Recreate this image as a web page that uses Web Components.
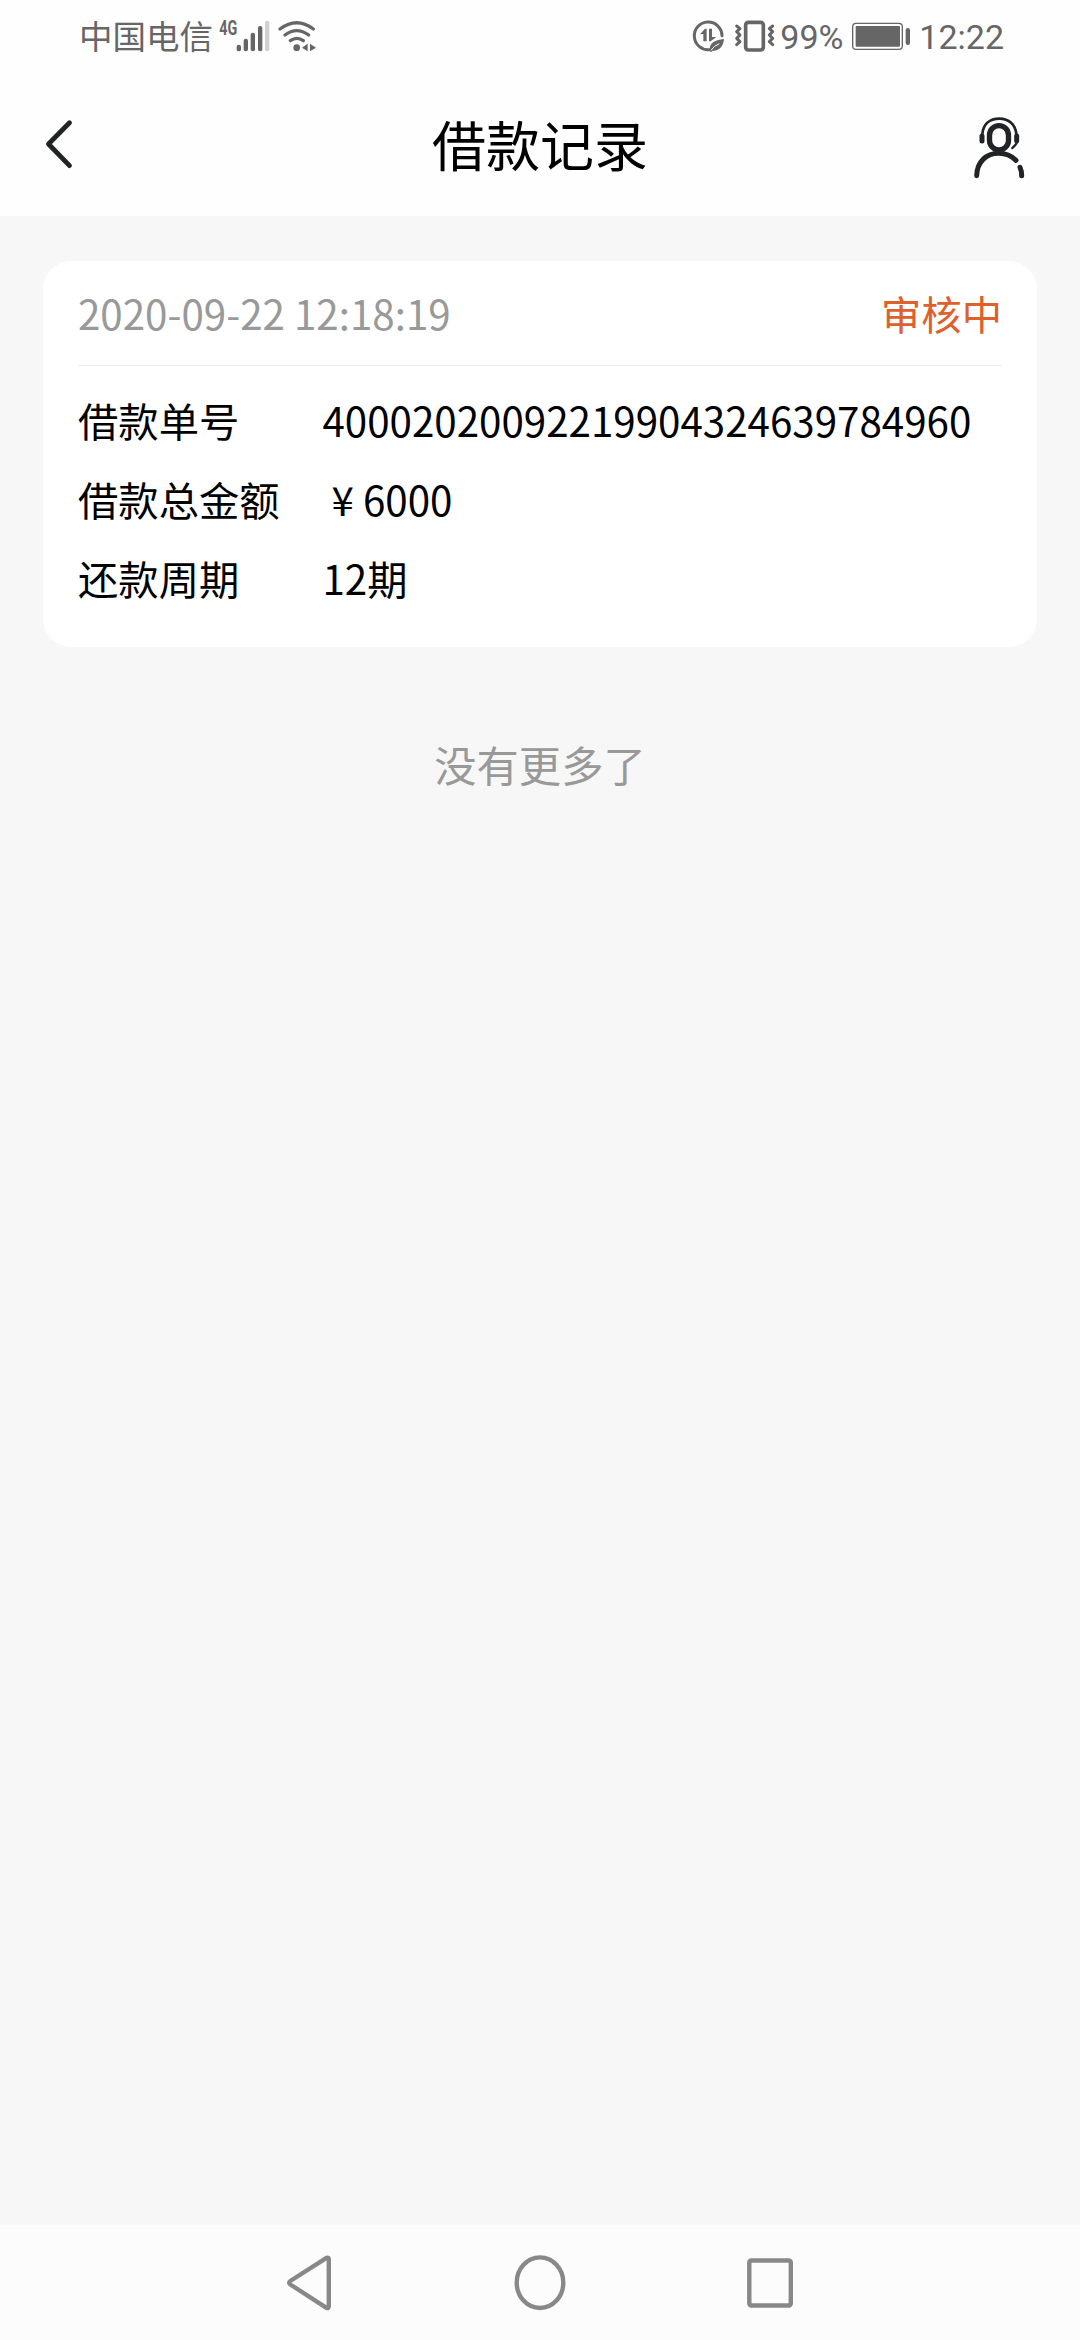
<!DOCTYPE html>
<html lang="zh-CN">
<head>
<meta charset="utf-8">
<title>借款记录</title>
<style>
  body {
    margin: 0;
    font-family: "Noto Sans CJK SC", sans-serif;
    color: #000;
  }
</style>
</head>
<body>
<app-screen>
  <status-bar slot="top" carrier="中国电信" battery="99%" time="12:22"></status-bar>
  <title-bar slot="top">借款记录</title-bar>

  <loan-card>
    <span slot="date">2020-09-22 12:18:19</span>
    <span slot="status">审核中</span>
    <loan-field label="借款单号">40002020092219904324639784960</loan-field>
    <loan-field label="借款总金额">&nbsp;¥ 6000</loan-field>
    <loan-field label="还款周期">12期</loan-field>
  </loan-card>
  <list-end>没有更多了</list-end>

  <system-nav slot="bottom"></system-nav>
</app-screen>

<script>
class BaseElement extends HTMLElement {
  constructor() {
    super();
    this.attachShadow({ mode: 'open' });
    this.shadowRoot.innerHTML = this.render();
  }
}

class AppScreen extends BaseElement {
  render() {
    return `
      <style>
        :host {
          display: flex;
          flex-direction: column;
          width: 1080px;
          height: 2340px;
          background: #f7f7f7;
          overflow: hidden;
        }
        main {
          flex: 1;
          padding: 45px 43px 0;
        }
      </style>
      <slot name="top"></slot>
      <main><slot></slot></main>
      <slot name="bottom"></slot>
    `;
  }
}

class StatusBar extends BaseElement {
  render() {
    return `
      <style>
        :host {
          display: flex;
          justify-content: space-between;
          align-items: flex-start;
          box-sizing: border-box;
          height: 72px;
          padding: 0 76px 0 79px;
          background: #fefefe;
          color: #666;
        }
        .group {
          display: flex;
          align-items: flex-start;
        }
        svg {
          display: block;
          height: 72px;
          fill: #666;
        }
        .carrier {
          width: 139px;
          font-size: 33.5px;
          line-height: 70px;
          white-space: nowrap;
        }
        .num {
          font-family: Roboto, sans-serif;
          font-size: 34px;
          line-height: 74px;
          white-space: nowrap;
        }
        .line {
          fill: none;
          stroke: #666;
          stroke-linecap: round;
          stroke-linejoin: round;
        }
        .net {
          font: bold 58px Roboto, sans-serif;
        }
      </style>
      <div class="group">
        <span class="carrier">${this.getAttribute('carrier')}</span>
        <svg width="122" viewBox="474 0 366 216">
          <text class="net" x="478" y="104" textLength="54" lengthAdjust="spacingAndGlyphs">4G</text>
          <rect x="530" y="134" width="13" height="20" rx="6.5"/>
          <rect x="551" y="116" width="13" height="38" rx="6"/>
          <rect x="572" y="98" width="13" height="56" rx="6"/>
          <rect x="594" y="78" width="13" height="76" rx="6"/>
          <rect x="615" y="62" width="13" height="92" rx="6" fill="#d0d0d0"/>
          <g class="line" stroke-width="10">
            <path d="M660 87Q710 49 760 87"/>
            <path d="M675 105Q710 79 746 105"/>
            <path d="M691 122Q711 108 730 122"/>
          </g>
          <circle cx="710" cy="143" r="10"/>
          <path d="M743 131V154L726 143ZM750 131V154L768 143Z"/>
        </svg>
      </div>
      <div class="group">
        <svg width="88" viewBox="36 0 264 216">
          <path class="line" stroke-width="9" stroke-linecap="butt" d="M88 149A41.500 41.500 0 1 1 126 107"/>
          <path d="M60 103L75 86H80V124H70V102ZM87 86h9v25h13l-17 13h-5z"/>
          <path d="M89 154C87 129 102 120 132 117C130 139 117 154 98 152L94 156Z"/>
          <path d="M93 151Q101 138 118 131" fill="none" stroke="#fefefe" stroke-width="3"/>
          <rect class="line" x="197" y="67" width="53" height="83" rx="8" stroke-width="11"/>
          <g class="line" stroke-width="9">
            <path d="M170 78L180 86L170 95L180 105L170 115L180 125L170 134"/>
            <path d="M278 78L268 86L278 95L268 105L278 115L268 125L278 134"/>
          </g>
        </svg>
        <span class="num" style="width:72px">${this.getAttribute('battery')}</span>
        <svg width="59" viewBox="516 0 177 216">
          <rect class="line" x="518" y="70" width="149" height="78" rx="10" stroke-width="4"/>
          <rect x="527" y="78" width="133" height="62" rx="3"/>
          <rect x="677" y="84" width="13" height="51" rx="6"/>
        </svg>
        <span class="num" style="margin-left:8px">${this.getAttribute('time')}</span>
      </div>
    `;
  }
}

class TitleBar extends BaseElement {
  render() {
    return `
      <style>
        :host {
          display: grid;
          grid-template-columns: 120px 1fr 120px;
          align-items: center;
          height: 144px;
          background: #fefefe;
        }
        svg {
          display: block;
          fill: none;
          stroke: #222327;
          stroke-linecap: round;
          stroke-linejoin: round;
        }
        h1 {
          margin: 0;
          text-align: center;
          font-size: 54px;
          font-weight: 400;
          line-height: 142px;
        }
      </style>
      <svg width="120" height="144" viewBox="0 72 120 144" stroke-width="4.8">
        <path d="M69.5 122.7L48.5 144L69.5 165.6"/>
      </svg>
      <h1><slot></slot></h1>
      <svg width="120" height="144" viewBox="60 -54 360 432">
        <rect x="148.500" y="107" width="57" height="73" rx="28.500" stroke-width="16"/>
        <path d="M110 257C111 216 138 190 177 190Q206 190 228 211M240 232Q245 243 245 257" stroke-width="15"/>
        <path d="M127 132C130 102 149 86 178 86S226 104 229 132" stroke-width="8"/>
        <path d="M126 138V153M230 138V152" stroke-width="15"/>
        <path d="M232 155Q228 166 217 174" stroke-width="7"/>
      </svg>
    `;
  }
}

class LoanCard extends BaseElement {
  render() {
    return `
      <style>
        :host {
          display: block;
          box-sizing: border-box;
          height: 386px;
          padding: 0 35px 30px;
          border-radius: 28px;
          background: #fff;
          font-size: 40.32px;
        }
        header {
          display: flex;
          justify-content: space-between;
          height: 104px;
          line-height: 103px;
          margin-bottom: 14px;
          border-bottom: 1px solid #ebebeb;
          color: #999;
        }
        .status {
          color: #dd602d;
        }
      </style>
      <header>
        <slot name="date"></slot>
        <div class="status"><slot name="status"></slot></div>
      </header>
      <slot></slot>
    `;
  }
}

class LoanField extends BaseElement {
  render() {
    return `
      <style>
        :host {
          display: flex;
          line-height: 79px;
          white-space: nowrap;
        }
        .label {
          width: 244.5px;
        }
      </style>
      <span class="label">${this.getAttribute('label')}</span>
      <span><slot></slot></span>
    `;
  }
}

class ListEnd extends BaseElement {
  render() {
    return `
      <style>
        :host {
          display: block;
          margin-top: 77px;
          text-align: center;
          font-size: 42.3px;
          line-height: 80px;
          color: #999;
        }
      </style>
      <slot></slot>
    `;
  }
}

class SystemNav extends BaseElement {
  render() {
    return `
      <style>
        :host {
          display: flex;
          justify-content: center;
          align-items: center;
          gap: 174px;
          height: 115px;
          background: #fcfcfc;
        }
        svg {
          display: block;
          fill: none;
          stroke: #888;
          stroke-width: 4.4;
          stroke-linejoin: round;
        }
      </style>
      <svg width="56" height="60" viewBox="282 2258 56 60"><path d="M326.500 2262.800Q328.800 2262 328.800 2264.300V2311.300Q328.800 2313.600 326.500 2312.800L290.300 2289.500Q288 2287.700 290.300 2286Z"/></svg>
      <svg width="56" height="60" viewBox="512 2258 56 60"><ellipse cx="540" cy="2287.700" rx="23.300" ry="25.300"/></svg>
      <svg width="56" height="60" viewBox="741 2258 56 60"><rect x="748.300" y="2265.500" width="41.500" height="45" rx="2"/></svg>
    `;
  }
}

customElements.define('app-screen', AppScreen);
customElements.define('status-bar', StatusBar);
customElements.define('title-bar', TitleBar);
customElements.define('loan-card', LoanCard);
customElements.define('loan-field', LoanField);
customElements.define('list-end', ListEnd);
customElements.define('system-nav', SystemNav);
</script>
</body>
</html>
